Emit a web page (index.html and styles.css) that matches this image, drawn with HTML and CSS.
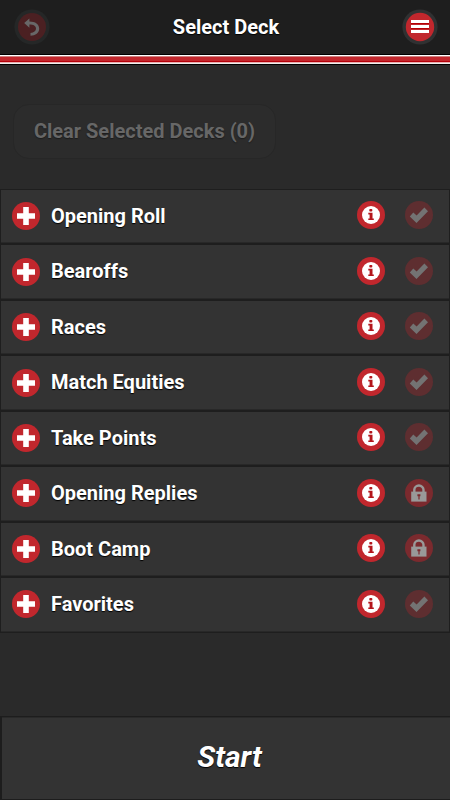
FILE: index.html
```
<!DOCTYPE html>
<html lang="en">
<head>
<meta charset="utf-8">
<title>Select Deck</title>
<link rel="stylesheet" href="styles.css">
</head>
<body>
<svg class="defs" width="0" height="0" aria-hidden="true">
  <symbol id="plus" viewBox="0 0 28 28"><circle cx="14" cy="14" r="14" fill="#c1272d"/><path d="M11.2 5h5.6v6.2H23v5.6h-6.2V23h-5.6v-6.2H5v-5.6h6.2z" fill="#fff"/></symbol>
  <symbol id="info" viewBox="0 0 28 28"><circle cx="14" cy="14" r="14" fill="#c1272d"/><circle cx="14" cy="14" r="9" fill="#fff"/><rect x="12.3" y="8" width="3" height="2.6" rx=".8" fill="#b3151b"/><path d="M11.3 11.8h4.2v5.7h1.3v1.6h-5.5v-1.6h1.3v-4.1h-1.3z" fill="#b3151b"/></symbol>
  <symbol id="check" viewBox="0 0 28 28"><circle cx="14" cy="14" r="14" fill="#5e2e30"/><path d="M4.8 15.4l3.5-3.8 3.3 3 7.8-8.2 3.6 3.8L11.5 22z" fill="#737373"/></symbol>
  <symbol id="lock" viewBox="0 0 28 28"><circle cx="14" cy="14" r="14" fill="#7b2a2e"/><path d="M9.3 14v-3.2a4.6 4.3 0 0 1 9.2 0V14" fill="none" stroke="#999" stroke-width="2.4"/><path d="M6.2 12.6h15.3v10H6.2z" fill="#999"/><path d="M12.4 15.3h3v2h-.8v3.2h-1.2v-3.2h-1z" fill="#7b2a2e"/></symbol>
</svg>
<div class="app">
  <header class="topbar">
    <button class="round back" aria-label="Back"><svg viewBox="0 0 36 36"><circle cx="18" cy="18" r="17.6" fill="#252727"/><circle cx="18" cy="18" r="14" fill="#4b2022"/><path d="M10.2 14l5.2-4.6v3.1c6 0 9.8 2.8 9.8 7.2 0 4-3.7 6.8-8.7 7v-2.8c3.4-.2 5.5-1.9 5.5-4.1 0-2.8-2.5-4.2-6.6-4.2v3.1z" fill="#686868"/></svg></button>
    <h1>Select Deck</h1>
    <button class="round" aria-label="Menu"><svg viewBox="0 0 36 36"><circle cx="18" cy="18" r="17.6" fill="#303132"/><circle cx="18" cy="18" r="14.2" fill="#c1272d"/><path d="M9 11h18v3H9zM9 16h18v3H9zM9 21h18v3H9z" fill="#fff"/><path d="M9 14h18v1H9zM9 19h18v1H9z" fill="#b40005"/></svg></button>
  </header>
  <div class="stripe"></div>
  <main>
    <button class="clear" disabled>Clear Selected Decks (0)</button>
    <ul class="decks">
      <li><svg><use href="#plus"/></svg><span>Opening Roll</span><svg class="info"><use href="#info"/></svg><svg class="state"><use href="#check"/></svg></li>
      <li><svg><use href="#plus"/></svg><span>Bearoffs</span><svg class="info"><use href="#info"/></svg><svg class="state"><use href="#check"/></svg></li>
      <li><svg><use href="#plus"/></svg><span>Races</span><svg class="info"><use href="#info"/></svg><svg class="state"><use href="#check"/></svg></li>
      <li><svg><use href="#plus"/></svg><span>Match Equities</span><svg class="info"><use href="#info"/></svg><svg class="state"><use href="#check"/></svg></li>
      <li><svg><use href="#plus"/></svg><span>Take Points</span><svg class="info"><use href="#info"/></svg><svg class="state"><use href="#check"/></svg></li>
      <li><svg><use href="#plus"/></svg><span>Opening Replies</span><svg class="info"><use href="#info"/></svg><svg class="state"><use href="#lock"/></svg></li>
      <li><svg><use href="#plus"/></svg><span>Boot Camp</span><svg class="info"><use href="#info"/></svg><svg class="state"><use href="#lock"/></svg></li>
      <li><svg><use href="#plus"/></svg><span>Favorites</span><svg class="info"><use href="#info"/></svg><svg class="state"><use href="#check"/></svg></li>
    </ul>
  </main>
  <button class="start">Start</button>
</div>
</body>
</html>
```
FILE: styles.css
```
* { box-sizing: border-box; }
body { margin: 0; background: #2a2a2a; color: #fff; font-family: Roboto, "Liberation Sans", sans-serif; }
button { margin: 0; padding: 0; border: 0; background: none; color: inherit; font: inherit; }
.defs { display: block; }
.app { display: flex; flex-direction: column; height: 800px; overflow: hidden; }
.topbar { display: flex; align-items: center; justify-content: space-between; height: 54px; padding: 0 12px 1px 14px; background: #1e1e1e; }
.topbar h1 { margin: 0; font-size: 20px; font-weight: 700; line-height: 24px; text-shadow: 0 1px 1px #000; }
.round { width: 36px; height: 36px; }
.round svg { display: block; width: 36px; height: 36px; }
.stripe { flex: none; height: 11px; background: linear-gradient(#000 0 1px, #fff 1px 2px, #d08080 2px 3px, #c1272d 3px 7px, #b5000a 7px 8px, #e8b0b0 8px 9px, #eee 9px 10px, #000 10px 11px); }
main { flex: 1; }
.clear { display: block; width: 263px; height: 55px; margin: 39px 0 30px 13px; padding: 0 0 2px 0; border: 1px solid #272727; border-radius: 16px; background: #2c2c2c; color: #676767; font-size: 20px; font-weight: 700; text-shadow: 0 1px 1px #1c1c1c; }
.decks { display: grid; grid-auto-rows: 1fr; gap: 2px; height: 443.6px; margin: 0; padding: 1px; list-style: none; background: #1e1e1e; }
.decks li { display: flex; align-items: center; padding: 0 16px 0 11.4px; border-bottom: 1px solid #282828; background: #333; font-size: 20px; font-weight: 700; }
.decks span { flex: 1; padding: 0 0 .6px 10.6px; line-height: 24px; text-shadow: 0 1px 1px #000; }
.decks svg { flex: none; width: 28px; height: 28px; }
.decks .info { margin: 0 20px 1.6px 0; }
.decks .state { margin-bottom: 1.6px; }
.start { flex: none; height: 84px; padding: 0 0 3px 7px; border: solid #1d1d1d; border-width: 1px 0 1px 2px; background: #333; box-shadow: inset 0 1px #292929; font-size: 30px; font-style: italic; font-weight: 700; text-shadow: 0 1px 1px #000; }
```
